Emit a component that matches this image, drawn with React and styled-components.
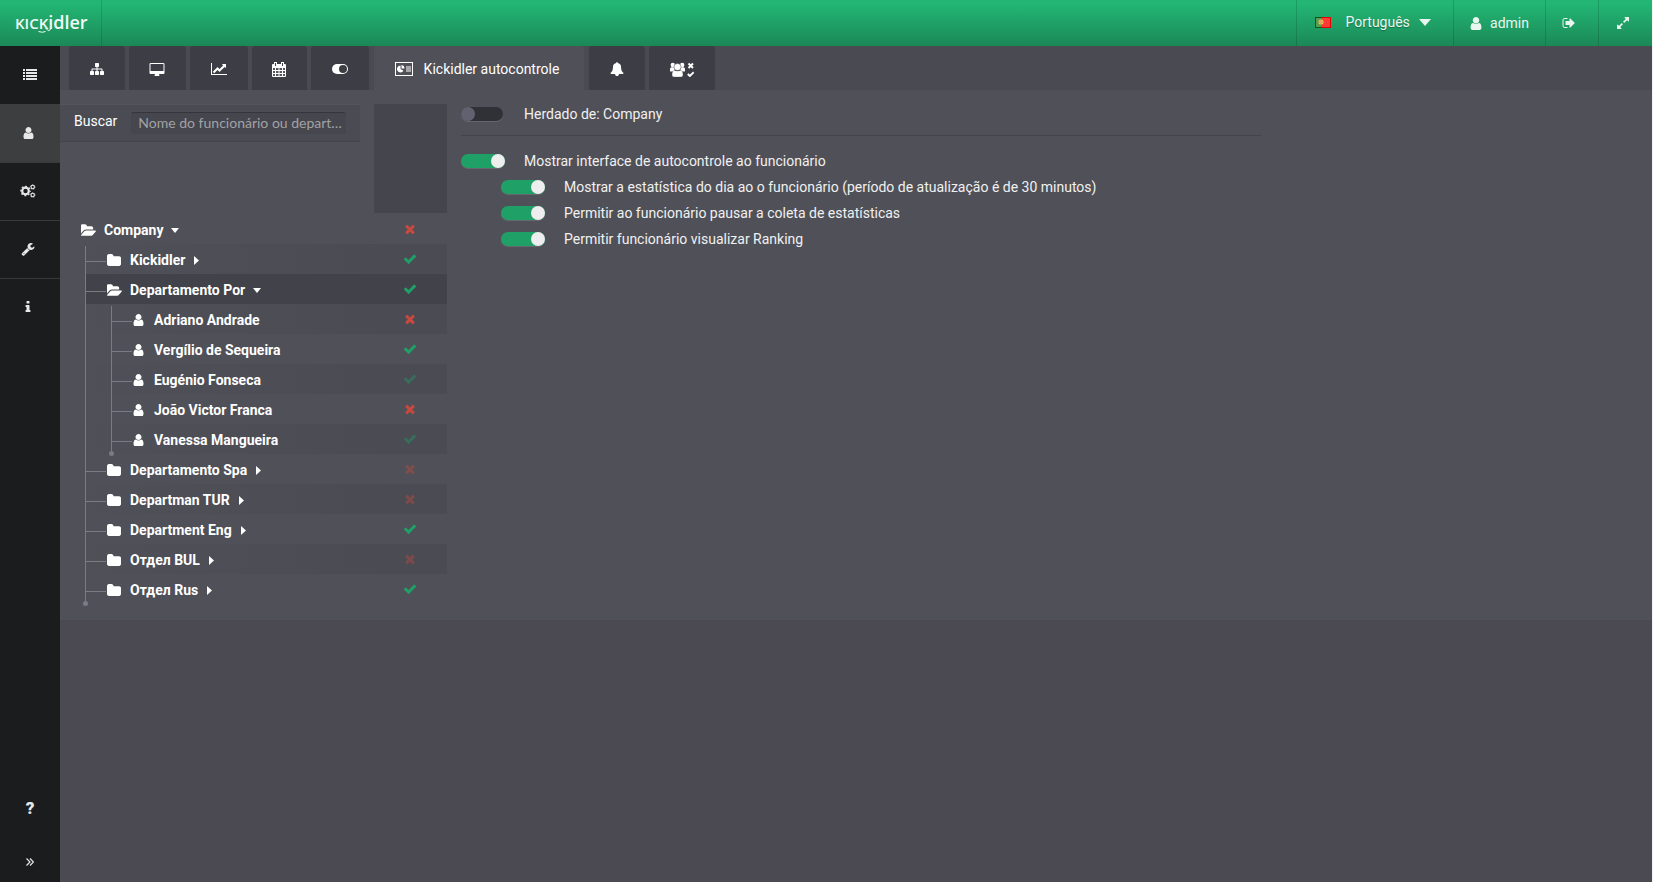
import React from "react";
import styled, { createGlobalStyle, css } from "styled-components";

const GlobalStyle = createGlobalStyle`
  *, *::before, *::after { box-sizing: border-box; }
  body { margin: 0; background: #4b4a53; color: #fff; font: 14px/20px Roboto, "Liberation Sans", sans-serif; }
  button, input, select { font: inherit; color: inherit; margin: 0; }
  button { border: 0; background: none; padding: 0; cursor: pointer; }
  svg { display: block; fill: currentColor; flex: none; }
`;

const Page = styled.div`
  display: flex;
  flex-direction: column;
  min-height: 100vh;
  border-right: 1px solid #f2f2f2;
`;

/* Header */
const Header = styled.header`
  display: flex;
  height: 46px;
  background: linear-gradient(#22b573, #22b573 10%, #1b8857);
  color: #e9f6f0;
  text-shadow: 0 1px 1px rgba(0, 0, 0, 0.3);
`;
const Brand = styled.a`
  position: relative;
  display: flex;
  align-items: baseline;
  width: 102px;
  padding: 9px 0 0 15px;
  border-right: 1px solid rgba(0, 0, 0, 0.12);
  color: #f0fbf6;
  font: 600 18px/26px "Open Sans", "Noto Sans", sans-serif;
  text-decoration: none;
  text-shadow: none;
`;
const BrandCaps = styled.span`
  font-size: 15px;
`;
const Smile = styled.svg`
  position: absolute;
  left: 38px;
  top: 24px;
  fill: none;
  stroke: currentColor;
`;
const HeaderTools = styled.div`
  display: flex;
  margin-left: auto;
`;
const headerCell = css`
  display: flex;
  align-items: center;
  justify-content: center;
  width: ${(p) => p.$width}px;
  border-left: 1px solid rgba(0, 0, 0, 0.14);
`;
const HeaderButton = styled.button`
  ${headerCell}
  gap: 8px;
  padding-right: ${(p) => (p.$compact ? 6 : 0)}px;
`;
const Language = styled.label`
  ${headerCell}
  padding: 0 5px 2px 0;
`;
const LanguageSelect = styled.select`
  appearance: none;
  width: 73px;
  margin-left: 15px;
  padding: 0;
  border: 0;
  background: none;
  text-shadow: inherit;
  option { color: #222; }
`;

/* Frame */
const Body = styled.div`
  display: flex;
  flex: 1;
`;
const Sidebar = styled.nav`
  display: flex;
  flex-direction: column;
  width: 60px;
  flex: none;
  background: #1b1c1d;
  color: #e8e8e8;
`;
const SideButton = styled.button`
  display: flex;
  align-items: center;
  justify-content: center;
  height: ${(p) => p.$height || 58}px;
  padding: 0 ${(p) => (p.$wide ? 0 : 4)}px 2px 0;
  border-top: 1px solid ${(p) => (p.$ruled ? "#38393a" : "transparent")};
  background: ${(p) => (p.$active ? "#3d3e3f" : "transparent")};
  font-weight: 900;
  font-size: 17px;
`;
const SideSpacer = styled.div`
  flex: 1;
`;
const Main = styled.main`
  flex: 1;
  min-width: 0;
`;

/* Tabs */
const Tabs = styled.div`
  display: flex;
  gap: 4px;
  height: 44px;
  padding: 0 9px;
  background: #4a4a52;
`;
const Tab = styled.button`
  display: flex;
  align-items: center;
  justify-content: center;
  gap: 11px;
  width: ${(p) => p.$width}px;
  margin: 0 ${(p) => (p.$active ? 1 : 0)}px;
  padding: 2px ${(p) => (p.$active ? 4 : 1)}px 0 0;
  border-radius: 3px 3px 0 0;
  background: ${(p) => (p.$active ? "#505058" : "#3d3d45")};
`;

/* Content */
const Panel = styled.div`
  display: flex;
  align-items: flex-start;
  padding: 14px 0 16px;
  background: #505058;
`;
const Staff = styled.section`
  width: 387px;
  flex: none;
`;
const StaffHead = styled.div`
  display: flex;
  justify-content: space-between;
  height: 110px;
`;
const Search = styled.div`
  display: flex;
  align-items: center;
  gap: 14px;
  width: 300px;
  height: 38px;
  padding: 0 14px;
  border-top: 1px solid #55555d;
  border-bottom: 1px solid #43434b;
  background: #4b4b53;
  label { padding-bottom: 5px; }
`;
const SearchInput = styled.input`
  flex: 1;
  min-width: 0;
  height: 22px;
  padding: 0 2px 2px 6px;
  border: 1px solid #46464e;
  border-top-color: #35353d;
  border-radius: 3px;
  background: #46464e;
  font-family: Lato, sans-serif;
  text-overflow: ellipsis;
  outline: 0;
  &::placeholder { color: #a2a2a5; opacity: 1; }
`;
const ColumnHead = styled.div`
  width: 73px;
  height: 109px;
  background: #45454d;
`;
const Tree = styled.ul`
  margin: 0;
  padding: 0;
  list-style: none;
`;
const Row = styled.li`
  display: flex;
  height: 30px;
  padding-left: ${(p) => (p.$level ? 25 : 21)}px;
  background: ${(p) => (p.$striped ? "linear-gradient(90deg, #505058, #4b4b53 85%)" : "none")};
`;
const Rail = styled.span`
  position: relative;
  width: 26px;
  flex: none;
  background: linear-gradient(#7b7b86, #7b7b86) 0 ${(p) => (p.$first ? 2 : 0)}px / 1px 100% no-repeat;
  ${(p) =>
    p.$last &&
    css`
      &::after {
        content: "";
        position: absolute;
        left: -2px;
        bottom: -2px;
        width: 5px;
        height: 5px;
        border-radius: 50%;
        background: #7b7b86;
      }
    `}
`;
const RowBody = styled.span`
  display: flex;
  flex: 1;
  margin-left: ${(p) => (p.$level ? -25 : 0)}px;
  background: ${(p) => (p.$selected ? "#42424a" : "none")};
`;
const Branch = styled.span`
  width: 21px;
  background: linear-gradient(#7b7b86, #7b7b86) 0 17px / 20px 1px no-repeat;
`;
const NodeButton = styled.button`
  display: flex;
  align-items: center;
  flex: 1;
  padding-top: 2px;
  font-weight: 700;
  text-align: left;
`;
const NodeIcon = styled.span`
  display: flex;
  width: ${(p) => (p.$person ? 21 : 23)}px;
`;
const Arrow = styled.svg`
  margin-left: ${(p) => (p.$open ? 8 : 9)}px;
`;
const Status = styled.span`
  display: flex;
  align-items: center;
  justify-content: center;
  width: 73px;
  padding-right: 1px;
  color: ${(p) => (p.$on ? "#1fa067" : "#c8493f")};
  opacity: ${(p) => (p.$dim ? 0.4 : 1)};
`;

/* Settings */
const Settings = styled.form`
  width: 800px;
  margin-left: 14px;
`;
const SettingGroup = styled.div`
  padding-bottom: 11px;
  margin-bottom: 12px;
  border-bottom: 1px solid #43434b;
`;
const Setting = styled.label`
  display: flex;
  align-items: center;
  gap: 19px;
  height: ${(p) => (p.$tall ? 20 : 26)}px;
  margin-left: ${(p) => (p.$nested ? 40 : 0)}px;
  color: #f0f0f0;
`;
const Switch = styled.input.attrs({ type: "checkbox" })`
  appearance: none;
  display: flex;
  width: 44px;
  height: 14px;
  border-radius: 7px;
  background: #303136;
  box-shadow: 0 1px 0 #66666d;
  &::before {
    content: "";
    width: 14px;
    height: 14px;
    border-radius: 50%;
    background: #62616f;
  }
  &:not(:checked) { width: 42px; margin-right: 2px; }
  &:checked { justify-content: flex-end; background: #1fa067; }
  &:checked::before { background: #eee; }
`;

const PATHS = {
  user: "M1536 1399q0 109-62.5 187t-150.5 78h-854q-88 0-150.5-78t-62.5-187q0-85 8.5-160.5t31.5-152 58.5-131 94-89 134.5-34.5q131 128 313 128t313-128q76 0 134.5 34.5t94 89 58.5 131 31.5 152 8.5 160.5zm-256-887q0 159-112.5 271.5t-271.5 112.5-271.5-112.5-112.5-271.5 112.5-271.5 271.5-112.5 271.5 112.5 112.5 271.5z",
  check: "M1671 566q0 40-28 68l-724 724-136 136q-28 28-68 28t-68-28l-136-136-362-362q-28-28-28-68t28-68l136-136q28-28 68-28t68 28l294 295 656-657q28-28 68-28t68 28l136 136q28 28 28 68z",
  times: "M1490 1322q0 40-28 68l-136 136q-28 28-68 28t-68-28l-294-294-294 294q-28 28-68 28t-68-28l-136-136q-28-28-28-68t28-68l294-294-294-294q-28-28-28-68t28-68l136-136q28-28 68-28t68 28l294 294 294-294q28-28 68-28t68 28l136 136q28 28 28 68t-28 68l-294 294 294 294q28 28 28 68z",
  folder: "M1728 608v704q0 92-66 158t-158 66h-1216q-92 0-158-66t-66-158v-960q0-92 66-158t158-66h320q92 0 158 66t66 158v32h672q92 0 158 66t66 158z",
  folderOpen: "M1815 952q0 31-31 66l-336 396q-43 51-120.5 86.5t-143.5 35.5h-1088q-34 0-60.5-13t-26.5-43q0-31 31-66l336-396q43-51 120.5-86.5t143.5-35.5h1088q34 0 60.5 13t26.5 43zm-343-344v160h-832q-94 0-197 47.5t-164 119.5l-337 396-5 6q0-4-.5-12.5t-.5-12.5v-960q0-92 66-158t158-66h320q92 0 158 66t66 158v32h544q92 0 158 66t66 158z",
  bell: "M1728 1408q0 52-38 90t-90 38h-448q0 106-75 181t-181 75-181-75-75-181h-448q-52 0-90-38t-38-90q50-42 91-88t85-119.5 74.5-158.5 50-206 19.5-260q0-152 117-282.5t307-158.5q-8-19-8-39 0-40 28-68t68-28 68 28 28 68q0 20-8 39 190 28 307 158.5t117 282.5q0 139 19.5 260t50 206 74.5 158.5 85 119.5 91 88z",
  desktop: "M1728 992v-832q0-13-9.5-22.5t-22.5-9.5h-1600q-13 0-22.5 9.5t-9.5 22.5v832q0 13 9.5 22.5t22.5 9.5h1600q13 0 22.5-9.5t9.5-22.5zm128-832v1088q0 66-47 113t-113 47h-544q0 37 16 77.5t32 71 16 43.5q0 26-19 45t-45 19h-512q-26 0-45-19t-19-45q0-14 16-44t32-70 16-78h-544q-66 0-113-47t-47-113v-1088q0-66 47-113t113-47h1600q66 0 113 47t47 113z",
  sitemap: "M1792 1248v320q0 40-28 68t-68 28h-320q-40 0-68-28t-28-68v-320q0-40 28-68t68-28h96v-192h-512v192h96q40 0 68 28t28 68v320q0 40-28 68t-68 28h-320q-40 0-68-28t-28-68v-320q0-40 28-68t68-28h96v-192h-512v192h96q40 0 68 28t28 68v320q0 40-28 68t-68 28h-320q-40 0-68-28t-28-68v-320q0-40 28-68t68-28h96v-192q0-52 38-90t90-38h512v-192h-96q-40 0-68-28t-28-68v-320q0-40 28-68t68-28h320q40 0 68 28t28 68v320q0 40-28 68t-68 28h-96v192h512q52 0 90 38t38 90v192h96q40 0 68 28t28 68z",
  chart: "M2048 1536v128h-2048v-1536h128v1408h1920zm-128-1248v435q0 21-19.5 29.5t-35.5-7.5l-121-121-633 633q-10 10-23 10t-23-10l-233-233-416 416-192-192 585-585q10-10 23-10t23 10l233 233 464-464-121-121q-16-16-7.5-35.5t29.5-19.5h435q14 0 23 9t9 23z",
  signOut: "M704 1440q0 4 1 20t.5 26.5-3 23.5-10 19.5-20.5 6.5h-320q-119 0-203.5-84.5t-84.5-203.5v-704q0-119 84.5-203.5t203.5-84.5h320q13 0 22.5 9.5t9.5 22.5q0 4 1 20t.5 26.5-3 23.5-10 19.5-20.5 6.5h-320q-66 0-113 47t-47 113v704q0 66 47 113t113 47h312l11.5 1 11.5 3 8 5.5 7 9 2 13.5zm928-544q0 26-19 45l-544 544q-19 19-45 19t-45-19-19-45v-288h-448q-26 0-45-19t-19-45v-384q0-26 19-45t45-19h448v-288q0-26 19-45t45-19 45 19l544 544q19 19 19 45z",
  expand: "M883 1056q0 13-10 23l-332 332 144 144q19 19 19 45t-19 45-45 19h-448q-26 0-45-19t-19-45v-448q0-26 19-45t45-19 45 19l144 144 332-332q10-10 23-10t23 10l114 114q10 10 10 23zm781-864v448q0 26-19 45t-45 19-45-19l-144-144-332 332q-10 10-23 10t-23-10l-114-114q-10-10-10-23t10-23l332-332-144-144q-19-19-19-45t19-45 45-19h448q26 0 45 19t19 45z",
  wrench: "M448 1472q0-26-19-45t-45-19-45 19-19 45 19 45 45 19 45-19 19-45zm644-420l-682 682q-37 37-90 37-52 0-91-37l-106-108q-38-36-38-90 0-53 38-91l681-681q39 98 114.5 173.5t173.5 114.5zm634-435q0 39-23 106-47 134-164.5 217.5t-258.5 83.5q-185 0-316.5-131.5t-131.5-316.5 131.5-316.5 316.5-131.5q58 0 121.5 16.5t107.5 46.5q16 11 16 28t-16 28l-293 169v224l193 107q5-3 79-48.5t135.5-81 70.5-35.5q15 0 23.5 10t8.5 25z",
  info: "M1216 1344v128q0 26-19 45t-45 19h-512q-26 0-45-19t-19-45v-128q0-26 19-45t45-19h64v-384h-64q-26 0-45-19t-19-45v-128q0-26 19-45t45-19h384q26 0 45 19t19 45v576h64q26 0 45 19t19 45zm-128-1152v192q0 26-19 45t-45 19h-256q-26 0-45-19t-19-45v-192q0-26 19-45t45-19h256q26 0 45 19t19 45z",
};

const BOXES = {
  user: "256 128 1280 1536",
  folder: "64 128 1664 1408",
  folderOpen: "0 128 1815 1408",
  desktop: "-64 0 1920 1664",
  chart: "0 128 2048 1536",
};

function Icon({ name, width = 14, height = 14 }) {
  return (
    <svg width={width} height={height} viewBox={BOXES[name] || "0 0 1792 1792"} aria-hidden="true">
      <path fillRule="evenodd" d={PATHS[name]} />
    </svg>
  );
}

function ListIcon() {
  return (
    <svg width="14" height="12" viewBox="0 0 14 12" aria-hidden="true">
      {[0, 3, 6, 9].map((y) => (
        <path key={y} d={`M0 ${y}h2v2h-2zM3 ${y}h11v2h-11z`} />
      ))}
    </svg>
  );
}

function Gear({ x, y, r, teeth }) {
  const outer = r * 1.42;
  const tooth = (Math.PI * outer) / teeth;
  return (
    <g fill="none" stroke="currentColor">
      <circle cx={x} cy={y} r={r} strokeWidth={r * 0.66} />
      <circle cx={x} cy={y} r={outer} strokeWidth={r * 0.36} strokeDasharray={`${tooth} ${tooth}`} strokeDashoffset={tooth / 2} />
    </g>
  );
}

function GearsIcon() {
  return (
    <svg width="16" height="14" viewBox="0 0 16 14" aria-hidden="true">
      <Gear x={5.5} y={7} r={3.3} teeth={8} />
      <Gear x={12.7} y={3} r={1.7} teeth={6} />
      <Gear x={12.7} y={11} r={1.7} teeth={6} />
    </svg>
  );
}

function CalendarIcon() {
  return (
    <svg width="14" height="15" viewBox="0 0 14 15" aria-hidden="true">
      <path d="M1 2h12a1 1 0 0 1 1 1v11a1 1 0 0 1-1 1H1a1 1 0 0 1-1-1V3a1 1 0 0 1 1-1z" />
      <path d="M2 0h3v4H2zM9 0h3v4H9z" />
      <path d="M3 1h1v3H3zM10 1h1v3h-1z" fill="#3d3d45" />
      <path
        d="M1 6h2v2H1zM4 6h2.500v2H4zM7.500 6H10v2H7.500zM11 6h2v2h-2zM1 9h2v2H1zM4 9h2.500v2H4zM7.500 9H10v2H7.500zM11 9h2v2h-2zM1 12h2v2H1zM4 12h2.500v2H4zM7.500 12H10v2H7.500zM11 12h2v2h-2z"
        fill="#55555c"
      />
    </svg>
  );
}

function ToggleIcon() {
  return (
    <svg width="16" height="10" viewBox="0 0 16 10" aria-hidden="true">
      <rect width="16" height="10" rx="5" />
      <circle cx="11" cy="5" r="4" fill="#3d3d45" />
    </svg>
  );
}

function MonitorCardIcon() {
  return (
    <svg width="18" height="14" viewBox="0 0 18 14" aria-hidden="true">
      <rect x="0.500" y="0.500" width="17" height="13" fill="none" stroke="currentColor" />
      <path d="M5.500 3.500v3.500l3 1.800A3.500 3.500 0 1 1 5.500 3.500z" />
      <path d="M6.500 3a3.500 3.500 0 0 1 3 3.500h-3z" />
      <rect x="11" y="4" width="5" height="6" opacity="0.5" />
    </svg>
  );
}

function GroupIcon() {
  return (
    <svg width="24" height="15" viewBox="0 0 24 15" aria-hidden="true">
      <circle cx="2.800" cy="3" r="2.200" />
      <circle cx="12.200" cy="3" r="2.200" />
      <path d="M0 9V7Q0 5.300 1.500 5.300h3L4.500 9.500H1Q0 9.500 0 9zM15 9V7Q15 5.300 13.500 5.300h-3v4.200H14Q15 9.500 15 9z" />
      <circle cx="7.500" cy="5" r="3.600" stroke="#3d3d45" strokeWidth="0.500" />
      <path d="M2 13Q2 8.500 4.500 8.500q3 1 6 0Q13 8.500 13 13q0 2-2 2H4q-2 0-2-2z" stroke="#3d3d45" strokeWidth="0.300" />
      <path d="M18.500 1.500l4.500 4.500M23 1.500l-4.500 4.500M17.800 12l2 2 4-3.800" fill="none" stroke="currentColor" strokeWidth="1.900" />
    </svg>
  );
}

function DoubleAngle() {
  return (
    <svg width="8" height="8" viewBox="0 0 8 8" aria-hidden="true">
      <path d="M0.500 0.500L4 4 0.500 7.500M4 0.500L7.500 4 4 7.500" fill="none" stroke="currentColor" strokeWidth="1.200" />
    </svg>
  );
}

function Flag() {
  return (
    <svg width="16" height="11" viewBox="0 0 16 11" aria-hidden="true">
      <rect width="16" height="11" fill="#e00000" />
      <rect x="1" y="1" width="14" height="9" fill="#ff3b35" />
      <rect width="6" height="11" fill="#0b5a12" />
      <rect x="1" y="1" width="5" height="9" fill="#5a9d50" />
      <circle cx="6" cy="5" r="2.500" fill="#e8d24a" />
      <circle cx="6" cy="5" r="1.200" fill="#f4e9e4" stroke="#d33" strokeWidth="0.600" />
    </svg>
  );
}

const TREE = [
  { level: 0, name: "Company", kind: "open", on: false },
  { level: 1, name: "Kickidler", kind: "closed", on: true, first: true },
  { level: 1, name: "Departamento Por", kind: "open", on: true, selected: true },
  { level: 2, name: "Adriano Andrade", kind: "person", on: false, first: true },
  { level: 2, name: "Vergílio de Sequeira", kind: "person", on: true },
  { level: 2, name: "Eugénio Fonseca", kind: "person", on: true, dim: true },
  { level: 2, name: "João Victor Franca", kind: "person", on: false },
  { level: 2, name: "Vanessa Mangueira", kind: "person", on: true, dim: true, last: true },
  { level: 1, name: "Departamento Spa", kind: "closed", on: false, dim: true },
  { level: 1, name: "Departman TUR", kind: "closed", on: false, dim: true },
  { level: 1, name: "Department Eng", kind: "closed", on: true },
  { level: 1, name: "Отдел BUL", kind: "closed", on: false, dim: true },
  { level: 1, name: "Отдел Rus", kind: "closed", on: true, last: true },
];

function NodeGlyph({ kind }) {
  if (kind === "person") return <Icon name="user" width={11} height={12} />;
  if (kind === "open") return <Icon name="folderOpen" width={15} height={12} />;
  return <Icon name="folder" width={14} height={12} />;
}

function TreeRow({ node, index }) {
  const { level, kind } = node;
  return (
    <Row $level={level} $striped={index % 2 === 1}>
      {level === 2 && <Rail />}
      {level > 0 && <Rail $first={node.first} $last={node.last} />}
      <RowBody $level={level} $selected={node.selected}>
        {level > 0 && <Branch />}
        <NodeButton type="button">
          <NodeIcon $person={kind === "person"}>
            <NodeGlyph kind={kind} />
          </NodeIcon>
          {node.name}
          {kind === "open" && (
            <Arrow $open width="8" height="5" viewBox="0 0 8 5">
              <path d="M0 0h8L4 5z" />
            </Arrow>
          )}
          {kind === "closed" && (
            <Arrow width="5" height="9" viewBox="0 0 5 9">
              <path d="M0 0v9l5-4.500z" />
            </Arrow>
          )}
        </NodeButton>
        <Status $on={node.on} $dim={node.dim}>
          <Icon name={node.on ? "check" : "times"} />
        </Status>
      </RowBody>
    </Row>
  );
}

export default function App() {
  return (
    <Page>
      <GlobalStyle />
      <Header>
        <Brand href="#" aria-label="Kickidler">
          <BrandCaps>KICK</BrandCaps>idler
          <Smile width="14" height="9" viewBox="0 0 14 9" aria-hidden="true">
            <path d="M0.500 7.500q4 1.500 7 0M7.500 4q4 5 5.500 0" />
          </Smile>
        </Brand>
        <HeaderTools>
          <Language $width={157}>
            <Flag />
            <LanguageSelect aria-label="Idioma">
              <option>Português</option>
            </LanguageSelect>
            <svg width="12" height="7" viewBox="0 0 12 7" aria-hidden="true">
              <path d="M0 0h12L6 7z" />
            </svg>
          </Language>
          <HeaderButton type="button" $width={92}>
            <Icon name="user" width={12} height={13} />
            admin
          </HeaderButton>
          <HeaderButton type="button" $compact $width={53} aria-label="Sair">
            <Icon name="signOut" />
          </HeaderButton>
          <HeaderButton type="button" $compact $width={54} aria-label="Tela cheia">
            <Icon name="expand" />
          </HeaderButton>
        </HeaderTools>
      </Header>
      <Body>
        <Sidebar>
          <SideButton type="button" $wide aria-label="Lista"><ListIcon /></SideButton>
          <SideButton type="button" $active aria-label="Funcionários"><Icon name="user" width={11} height={12} /></SideButton>
          <SideButton type="button" $ruled aria-label="Configurações"><GearsIcon /></SideButton>
          <SideButton type="button" $ruled aria-label="Ferramentas"><Icon name="wrench" /></SideButton>
          <SideButton type="button" $ruled aria-label="Informações"><Icon name="info" /></SideButton>
          <SideSpacer />
          <SideButton type="button" $wide $height={68}>?</SideButton>
          <SideButton type="button" $wide $height={40} aria-label="Expandir"><DoubleAngle /></SideButton>
        </Sidebar>
        <Main>
          <Tabs role="tablist">
            <Tab type="button" role="tab" $width={56} aria-label="Estrutura"><Icon name="sitemap" /></Tab>
            <Tab type="button" role="tab" $width={57} aria-label="Monitor"><Icon name="desktop" width={16} height={13} /></Tab>
            <Tab type="button" role="tab" $width={58} aria-label="Gráficos"><Icon name="chart" width={16} height={12} /></Tab>
            <Tab type="button" role="tab" $width={55} aria-label="Calendário"><CalendarIcon /></Tab>
            <Tab type="button" role="tab" $width={58} aria-label="Alternar"><ToggleIcon /></Tab>
            <Tab type="button" role="tab" $width={210} $active aria-selected="true">
              <MonitorCardIcon />
              Kickidler autocontrole
            </Tab>
            <Tab type="button" role="tab" $width={56} aria-label="Notificações"><Icon name="bell" /></Tab>
            <Tab type="button" role="tab" $width={66} aria-label="Grupos"><GroupIcon /></Tab>
          </Tabs>
          <Panel>
            <Staff>
              <StaffHead>
                <Search>
                  <label htmlFor="search">Buscar</label>
                  <SearchInput id="search" placeholder="Nome do funcionário ou departamento" />
                </Search>
                <ColumnHead />
              </StaffHead>
              <Tree>
                {TREE.map((node, i) => (
                  <TreeRow key={node.name} node={node} index={i} />
                ))}
              </Tree>
            </Staff>
            <Settings>
              <SettingGroup>
                <Setting $tall><Switch />Herdado de: Company</Setting>
              </SettingGroup>
              <Setting><Switch defaultChecked />Mostrar interface de autocontrole ao funcionário</Setting>
              <Setting $nested><Switch defaultChecked />Mostrar a estatística do dia ao o funcionário (período de atualização é de 30 minutos)</Setting>
              <Setting $nested><Switch defaultChecked />Permitir ao funcionário pausar a coleta de estatísticas</Setting>
              <Setting $nested><Switch defaultChecked />Permitir funcionário visualizar Ranking</Setting>
            </Settings>
          </Panel>
        </Main>
      </Body>
    </Page>
  );
}
